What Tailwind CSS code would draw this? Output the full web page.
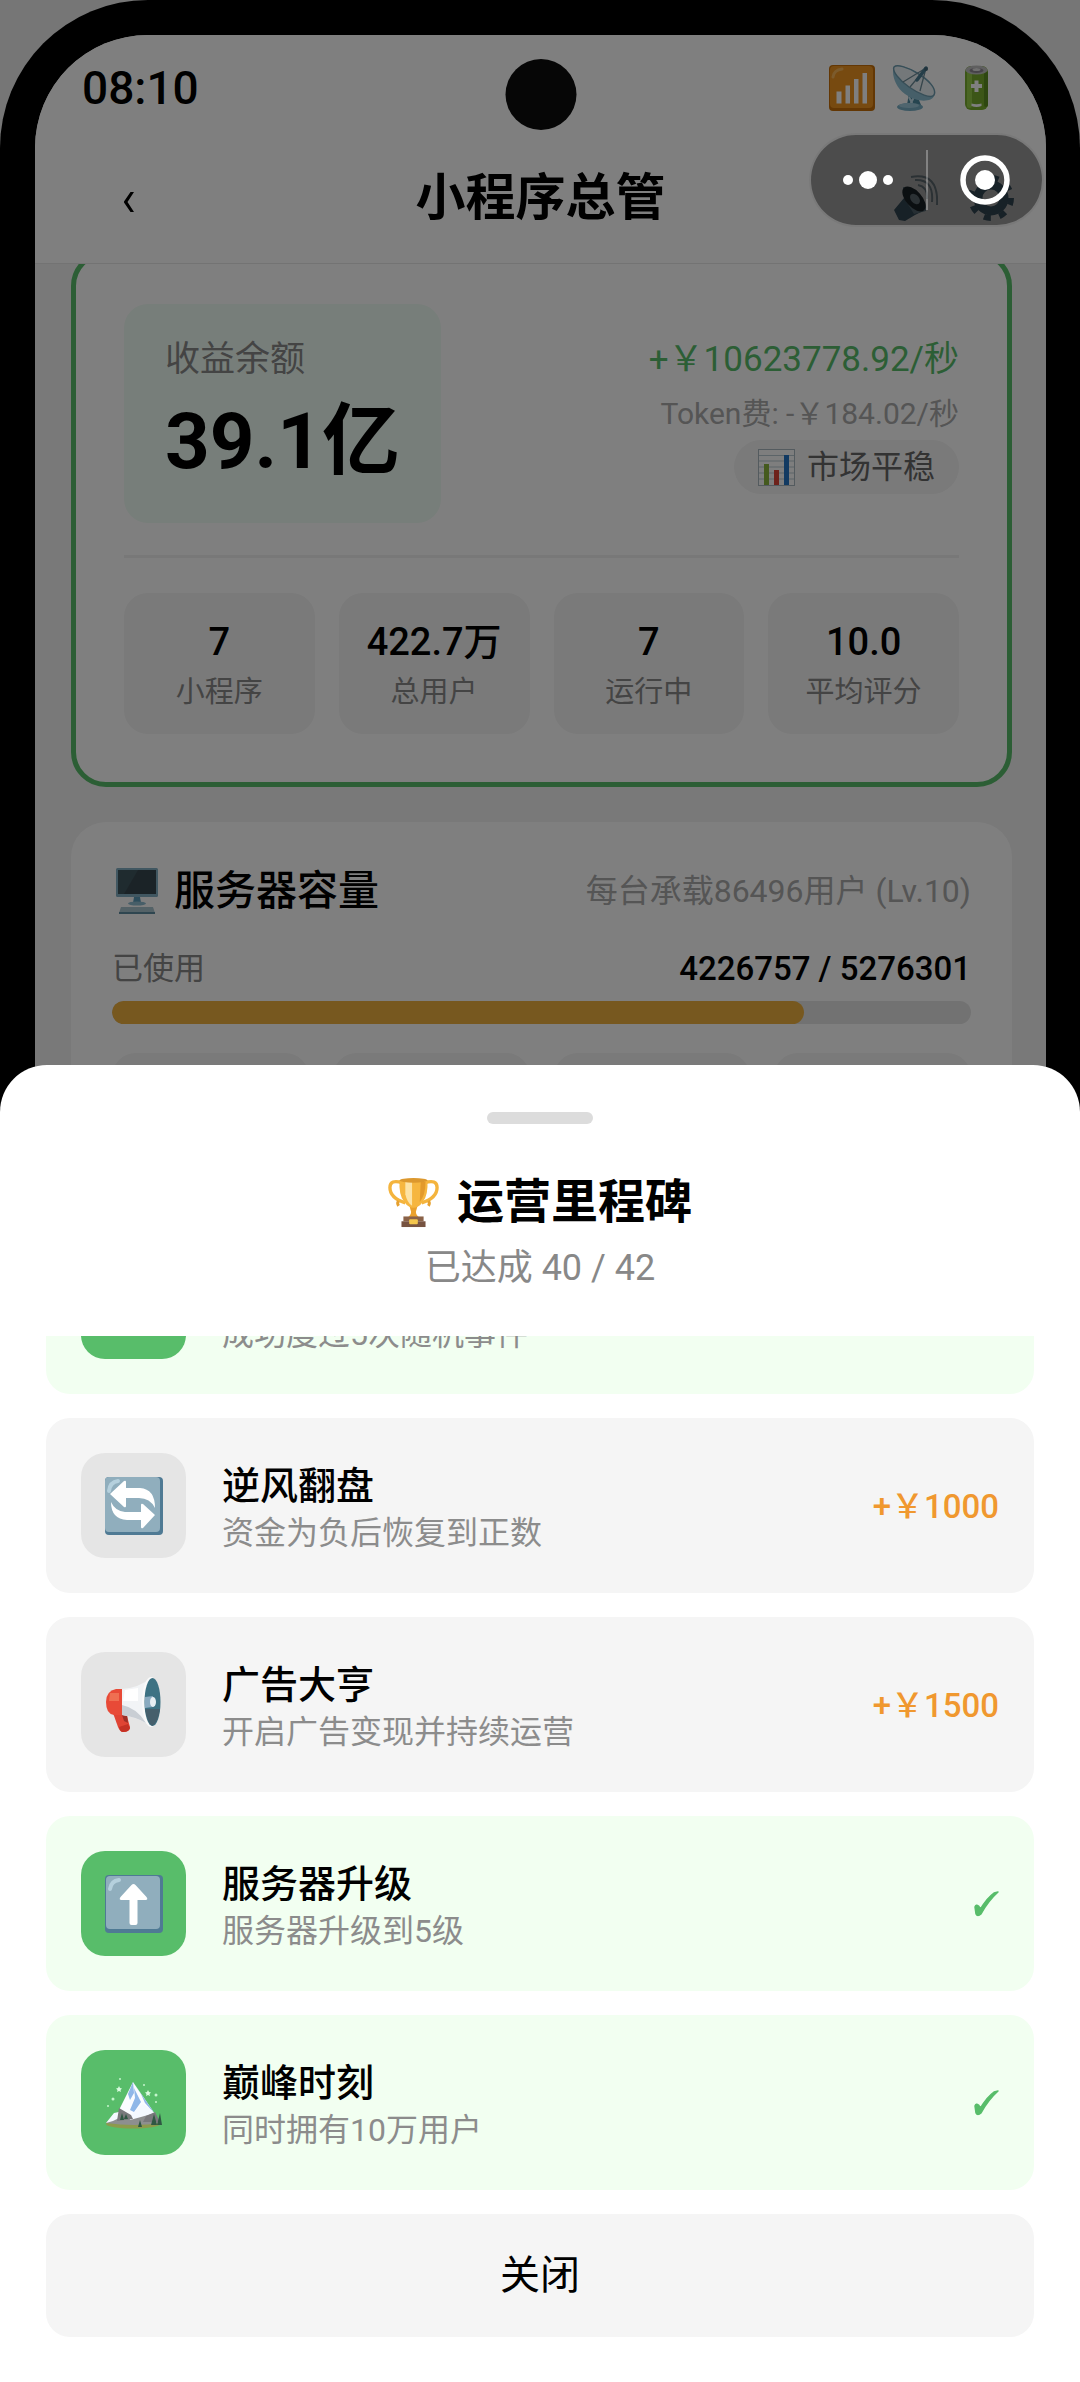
<!DOCTYPE html>
<html lang="zh-CN">
<head>
    <meta charset="UTF-8">
    <meta name="viewport" content="width=device-width, initial-scale=1.0">
    <title>小程序总管</title>
    <script src="https://cdn.jsdelivr.net/npm/@tailwindcss/browser@4"></script>
</head>
<body class="min-h-screen bg-[#ececec] font-[Roboto,'Noto_Sans_CJK_SC',sans-serif] text-black">

    <!-- 手机外壳 -->
    <div class="h-screen overflow-hidden rounded-t-[148px] bg-black pl-[35px] pr-[34px] pt-[35px]">
        <div class="relative h-full overflow-hidden rounded-t-[113px] bg-[#f2f2f2]">

            <!-- 摄像头 -->
            <div class="absolute left-1/2 top-6 size-[71px] -translate-x-1/2 rounded-full bg-[#0c0c0c]"></div>

            <header class="border-b border-[#e6e6e6] bg-white">
                <!-- 状态栏 -->
                <div class="flex h-[106px] items-center justify-between px-[47px]">
                    <span class="text-[46px] font-medium leading-[48px]">08:10</span>
                    <div class="flex gap-4">
                        <svg class="size-[46px]" viewBox="0 0 46 46" aria-label="信号">
                            <rect x="0" y="0" width="46" height="46" rx="4" fill="#c66f08"/>
                            <rect x="1" y="1" width="43" height="42" rx="4" fill="#ee9420"/>
                            <path d="M4 12Q5 5 13 4" stroke="#f8b659" stroke-width="3" fill="none" stroke-linecap="round"/>
                            <path d="M7.500 26.500h5v12h-5zM16.500 20.500h4.500v18h-4.500zM25 14h4.500v24.500h-4.500zM33.500 8h4.500v30.500h-4.500z" fill="#fff"/>
                        </svg>
                        <svg class="size-[46px]" viewBox="0 0 46 46" aria-label="卫星">
                            <path d="M18 28l-2 12h14l-4-10z" fill="#4d8aa0"/>
                            <path d="M18 32l4 8M23 32l-4 8" stroke="#c6e2ee" stroke-width="2"/>
                            <ellipse cx="19" cy="42" rx="13" ry="4" fill="#79afc5"/>
                            <ellipse cx="18" cy="40.500" rx="10" ry="2.500" fill="#9fcbdc"/>
                            <path d="M3 2C0 8 4 22 14 29C26 38 41 37 43 31C46 24 38 15 27 8C17 2 7-1 3 2z" fill="#8dbfd3"/>
                            <path d="M3 2C6-1 16 2 26 8C38 15 46 24 43 30C40 34 28 29 18 22C8 15 1 6 3 2z" fill="#e9f1f4" stroke="#6f9db0" stroke-width="1.500"/>
                            <path d="M35 3L12 17M35 3l-6 23M35 3L24 16l-5 6" stroke="#6c8b98" stroke-width="1.300" fill="none"/>
                            <path d="M35 3l-9 12" stroke="#4a7c92" stroke-width="3.500" stroke-linecap="round"/>
                            <circle cx="35" cy="4" r="2" fill="#41677a"/>
                        </svg>
                        <svg class="size-[46px]" viewBox="0 0 46 46" aria-label="电量">
                            <rect x="12" y="1" width="23" height="44" rx="6" fill="#78ad2e"/>
                            <rect x="14" y="4" width="5" height="39" rx="2.500" fill="#96cc48"/>
                            <rect x="31" y="6" width="4" height="36" rx="2" fill="#5d8f22"/>
                            <ellipse cx="23.500" cy="5" rx="11" ry="4.500" fill="#bfbfbf"/>
                            <ellipse cx="23.500" cy="5.500" rx="7" ry="2.500" fill="#8d8690"/>
                            <ellipse cx="23.500" cy="4.500" rx="4" ry="1.500" fill="#dedede"/>
                            <path d="M21.500 15.500h4v3.500h3.500v4h-3.500v4h-4v-4h-3.500v-4h3.500z" fill="#fff"/>
                            <path d="M18.500 38.500q5 1.500 10 0v2.500q-5 2-10 0z" fill="#fff"/>
                        </svg>
                    </div>
                </div>

                <!-- 导航栏 -->
                <div class="grid h-[122px] grid-cols-[1fr_auto_1fr] items-center pb-2">
                    <button class="ml-[59px] flex size-[70px] items-center justify-center" aria-label="返回">
                        <svg class="mt-2 h-[22px] w-[14px]" viewBox="0 0 14 22"><path d="M8.500 1h3.500L5.500 11l6.500 10H8.500L2 11.500v-1z" fill="#000"/></svg>
                    </button>
                    <h1 class="text-[50px] font-semibold leading-[60px]">小程序总管</h1>
                    <div class="mr-8 flex justify-end gap-[30px]">
                        <button aria-label="声音">
                            <svg class="size-[46px]" viewBox="0 0 46 46">
                                <path d="M2 35l10-12 17 14-6 3-10 6-6-1z" fill="#4d6f82"/>
                                <path d="M12 23L11 12q8 0 16 8t7 16l-12 3z" fill="#7f9cab"/>
                                <ellipse cx="22" cy="24" rx="15" ry="8" transform="rotate(48 22 24)" fill="#27323a"/>
                                <ellipse cx="23" cy="24" rx="6" ry="4" transform="rotate(48 23 24)" fill="#90a4ae"/>
                                <path d="M26 10q10 2 9 14M23 5q19-1 17 22M19 2q28-5 26 28" stroke="#90a4ae" stroke-width="2" fill="none"/>
                            </svg>
                        </button>
                        <button aria-label="设置">
                            <svg class="size-[46px]" viewBox="0 0 46 46">
                                <circle cx="23" cy="23" r="13" fill="none" stroke="#4f6f82" stroke-width="9"/>
                                <circle cx="23" cy="23" r="20" fill="none" stroke="#4f6f82" stroke-width="6" stroke-dasharray="7 8.700"/>
                            </svg>
                        </button>
                    </div>
                </div>
            </header>

            <main class="overflow-hidden pl-9 pr-[34px]">
                <!-- 收益卡片 -->
                <section class="-mt-[13px] rounded-[35px] border-[5px] border-[#58bd6a] bg-white p-12">
                    <div class="flex justify-between border-b-[3px] border-[#f0f0f0] pb-8">
                        <div class="rounded-3xl bg-[#effcf4] px-[41px] pb-[29px] pt-[30px]">
                            <p class="text-[35px] leading-[52px] text-[#888]">收益余额</p>
                            <p class="mt-1 text-[78px] font-bold leading-[104px]">39.1亿</p>
                        </div>
                        <div class="flex flex-col items-end pt-7">
                            <p class="text-[35px] leading-[56px] text-[#58bd6a]">+￥10623778.92/秒</p>
                            <p class="text-[30px] leading-[52px] text-[#aaa]">Token费: -￥184.02/秒</p>
                            <p class="flex items-center gap-3 rounded-full bg-[#f4f4f4] px-6 text-[32px] leading-[54px] text-[#666]">
                                <svg class="size-[37px]" viewBox="0 0 37 37">
                                    <rect x=".5" y=".5" width="36" height="36" fill="#fdfdfd" stroke="#a9b7bf"/>
                                    <path d="M1 6.500h35M1 12h35M1 18h35M1 24h35M1 30h35" stroke="#b9c8d0"/>
                                    <path d="M6 15h5v21h-5z" fill="#8bb53c"/>
                                    <path d="M16 21h5v15h-5z" fill="#dc4437"/>
                                    <path d="M26 6h5v30h-5z" fill="#2474c4"/>
                                </svg>
                                市场平稳
                            </p>
                        </div>
                    </div>
                    <div class="mt-[35px] grid grid-cols-4 gap-6 text-center">
                        <div class="rounded-3xl bg-[#f4f4f4] pb-[18px] pt-[23px]">
                            <p class="text-[38px] font-medium leading-[52px]">7</p>
                            <p class="text-[29px] leading-[48px] text-[#888]">小程序</p>
                        </div>
                        <div class="rounded-3xl bg-[#f4f4f4] pb-[18px] pt-[23px]">
                            <p class="text-[38px] font-medium leading-[52px]">422.7万</p>
                            <p class="text-[29px] leading-[48px] text-[#888]">总用户</p>
                        </div>
                        <div class="rounded-3xl bg-[#f4f4f4] pb-[18px] pt-[23px]">
                            <p class="text-[38px] font-medium leading-[52px]">7</p>
                            <p class="text-[29px] leading-[48px] text-[#888]">运行中</p>
                        </div>
                        <div class="rounded-3xl bg-[#f4f4f4] pb-[18px] pt-[23px]">
                            <p class="text-[38px] font-medium leading-[52px]">10.0</p>
                            <p class="text-[29px] leading-[48px] text-[#888]">平均评分</p>
                        </div>
                    </div>
                </section>

                <!-- 服务器容量 -->
                <section class="mt-[35px] rounded-[35px] bg-white px-[41px] pb-12 pt-[39px]">
                    <div class="flex items-center justify-between">
                        <h2 class="flex items-center gap-4 text-[41px] font-medium leading-[60px]">
                            <svg class="ml-1 h-[46px] w-[42px]" viewBox="0 0 42 46">
                                <rect x="0" y="0" width="42" height="29" rx="1.500" fill="#82aec2"/>
                                <rect x="2" y="2" width="38" height="24" fill="#37474f"/>
                                <path d="M2 2h20L8 26H2z" fill="#3f565f"/>
                                <path d="M18 29h6l1 6h-8z" fill="#5b9ab8"/>
                                <ellipse cx="21" cy="35.500" rx="9" ry="2" fill="#8ebdd0"/>
                                <path d="M5 39h32l2 6H3z" fill="#a9c4cf"/>
                                <path d="M3 45h36" stroke="#5f8ca0" stroke-width="2"/>
                            </svg>
                            服务器容量
                        </h2>
                        <span class="text-[32px] leading-[48px] text-[#aaa]">每台承载86496用户 (Lv.10)</span>
                    </div>
                    <div class="mt-6 flex items-center justify-between leading-[48px]">
                        <span class="text-[31px] text-[#888]">已使用</span>
                        <span class="text-[33px] font-medium">4226757 / 5276301</span>
                    </div>
                    <div class="mt-2 h-[23px] overflow-hidden rounded-full bg-[#e5e5e5]">
                        <div class="h-full rounded-full bg-[#eeb03e]" style="width: 80.6%"></div>
                    </div>
                    <div class="mt-[29px] grid grid-cols-4 gap-6">
                        <div class="h-[140px] rounded-3xl bg-[#f4f4f4]"></div>
                        <div class="h-[140px] rounded-3xl bg-[#f4f4f4]"></div>
                        <div class="h-[140px] rounded-3xl bg-[#f4f4f4]"></div>
                        <div class="h-[140px] rounded-3xl bg-[#f4f4f4]"></div>
                    </div>
                </section>
            </main>
        </div>
    </div>

    <!-- 遮罩 -->
    <div class="fixed inset-0 bg-black/50"></div>

    <!-- 里程碑弹层 -->
    <div role="dialog" aria-labelledby="sheet-title" class="fixed inset-x-0 bottom-0 rounded-t-[47px] bg-white px-[46px] pb-[45px] pt-[47px]">
        <div class="mx-auto h-3 w-[106px] rounded-full bg-[#dcdcdc]"></div>
        <h2 id="sheet-title" class="mt-[46px] flex items-center justify-center gap-[18px] text-[47px] font-semibold leading-[64px]">
            <svg class="size-[51px]" viewBox="0 0 53 53">
                <path d="M15 6Q2 2 2 11q0 11 16 16M38 6q13-4 13 5 0 11-16 16" fill="none" stroke="#f4b43d" stroke-width="3.500"/>
                <path d="M11 25q-2 2 0 5M42 25q2 2 0 5" fill="none" stroke="#e6a02e" stroke-width="3"/>
                <path d="M22 29h9l-2 7q0 4 4 6H20q4-2 4-6z" fill="#eaa12d"/>
                <path d="M12 3h29q1 16-5 23-4 6-9.500 6T17 26Q11 19 12 3z" fill="#f6b63f"/>
                <path d="M18 5h7v25q-5-3-7-12z" fill="#fde3a5"/>
                <path d="M34 5h5q0 14-6 21z" fill="#e39a2c"/>
                <ellipse cx="26.500" cy="3.500" rx="14.500" ry="2.500" fill="#dc982e"/>
                <path d="M16 41h21v5H16z" fill="#8a6248"/>
                <path d="M14 46h25v6H14z" fill="#775341"/>
                <rect x="22" y="44" width="9" height="5" rx="1" fill="#f4c64c"/>
            </svg>
            运营里程碑
        </h2>
        <p class="mt-2 text-center text-[36px] leading-[52px] text-[#888]">已达成 40 / 42</p>

        <!-- 列表停在底部 -->
        <div class="mt-[42px] flex h-[854px] flex-col-reverse overflow-y-auto [scrollbar-width:none]">
            <ul class="flex flex-col gap-6">
                <li class="flex h-[175px] shrink-0 items-center gap-9 rounded-3xl bg-[#f2fff1] px-[35px]">
                    <div class="size-[105px] rounded-3xl bg-[#58bd6a]"></div>
                    <p class="flex-1 pt-[54px] text-[32px] leading-[46px] text-[#8c8c8c]">成功度过5次随机事件</p>
                </li>
                <li class="flex h-[175px] shrink-0 items-center gap-9 rounded-3xl bg-[#f5f5f5] px-[35px]">
                    <div class="flex size-[105px] items-center justify-center rounded-3xl bg-[#e5e5e5]">
                        <svg class="size-[58px]" viewBox="0 0 58 58">
                            <rect x="0" y="0" width="58" height="58" rx="4" fill="#4f7a94"/>
                            <rect x="0" y="0" width="55" height="55" rx="4" fill="#90aebd"/>
                            <path d="M4 14q1-9 9-10" fill="none" stroke="#b5d0dd" stroke-width="4" stroke-linecap="round"/>
                            <path d="M5 17L19 4q2-1 2 1v6h14q15 1 15 20-5-10-16-10H21v8q0 2-2 1z" fill="#fff"/>
                            <path d="M50 38L38 51q-2 1-2-1v-7H22Q6 42 6 25q4 9 14 10h16v-7q0-2 2-1z" fill="#fff"/>
                        </svg>
                    </div>
                    <div class="flex-1 pt-[6px]">
                        <h3 class="text-[38px] font-medium leading-[48px]">逆风翻盘</h3>
                        <p class="text-[32px] leading-[46px] text-[#8c8c8c]">资金为负后恢复到正数</p>
                    </div>
                    <span class="pt-[3px] text-[33px] font-medium text-[#f0982f]">+￥1000</span>
                </li>
                <li class="flex h-[175px] shrink-0 items-center gap-9 rounded-3xl bg-[#f5f5f5] px-[35px]">
                    <div class="flex size-[105px] items-center justify-center rounded-3xl bg-[#e5e5e5]">
                        <svg class="size-[58px]" viewBox="0 0 58 58">
                            <path d="M8 37h13l4 14q0 5-7 5-3 0-5-5z" fill="#e04434"/>
                            <path d="M17 39l5-1 1 9-4-2z" fill="#9d2f27"/>
                            <path d="M14 51l9-3 2 4q-1 4-7 4-3 0-4-5z" fill="#c53225"/>
                            <path d="M17 13H11Q1 15 1 26q0 12 8 13h9z" fill="#e84a37"/>
                            <path d="M5 17h9v8H4z" fill="#ef6f52"/>
                            <path d="M17 13Q34 12 47 1v50Q33 41 17 39z" fill="#f2f4f6"/>
                            <path d="M17 29q15 3 24 18-10-6-24-8z" fill="#c9ced4"/>
                            <path d="M20 14l13-2v13H18z" fill="#fff"/>
                            <ellipse cx="46" cy="26" rx="9" ry="25" fill="#fafafa"/>
                            <ellipse cx="47.500" cy="26" rx="8" ry="24" fill="#3d7283"/>
                            <path d="M40 33q2 13 7 17 6-3 8-17z" fill="#455f6c"/>
                            <path d="M40 21l8-1v11l-8 1z" fill="#8aabc0"/>
                            <ellipse cx="48" cy="26" rx="3" ry="5" fill="#e7eef2"/>
                        </svg>
                    </div>
                    <div class="flex-1 pt-[6px]">
                        <h3 class="text-[38px] font-medium leading-[48px]">广告大亨</h3>
                        <p class="text-[32px] leading-[46px] text-[#8c8c8c]">开启广告变现并持续运营</p>
                    </div>
                    <span class="pt-[3px] text-[33px] font-medium text-[#f0982f]">+￥1500</span>
                </li>
                <li class="flex h-[175px] shrink-0 items-center gap-9 rounded-3xl bg-[#f2fff1] px-[35px]">
                    <div class="flex size-[105px] items-center justify-center rounded-3xl bg-[#58bd6a]">
                        <svg class="size-[58px]" viewBox="0 0 58 58">
                            <rect x="0" y="0" width="58" height="58" rx="4" fill="#4f7a94"/>
                            <rect x="1" y="1" width="54" height="53" rx="4" fill="#90aebd"/>
                            <path d="M5 14q1-8 9-9" fill="none" stroke="#b5d0dd" stroke-width="4" stroke-linecap="round"/>
                            <path d="M26.500 10q2-2 4 0l11 12q2 3-1 3h-8v23q0 2-2 2h-4q-2 0-2-2V25h-8q-3 0-1-3z" fill="#fff"/>
                        </svg>
                    </div>
                    <div class="flex-1 pt-[6px]">
                        <h3 class="text-[38px] font-medium leading-[48px]">服务器升级</h3>
                        <p class="text-[32px] leading-[46px] text-[#8c8c8c]">服务器升级到5级</p>
                    </div>
                    <svg class="h-[26px] w-[25px]" viewBox="0 0 25 26" aria-label="已达成"><path d="M1 16q1-3 3.500-1l2 3Q13 7 20 2l4-1Q14 10 7 23q-3.500 3-5 0z" fill="#58bd6a" stroke="#58bd6a" stroke-width="1.500" stroke-linejoin="round"/></svg>
                </li>
                <li class="flex h-[175px] shrink-0 items-center gap-9 rounded-3xl bg-[#f2fff1] px-[35px]">
                    <div class="flex size-[105px] items-center justify-center rounded-3xl bg-[#58bd6a]">
                        <svg class="size-[58px]" viewBox="0 0 58 58">
                            <ellipse cx="28" cy="50" rx="27" ry="4.500" fill="#8c9a4c"/>
                            <path d="M1 49l8-9 6-3 6 6 18-8 9 5 8 9q-26 4-55 0z" fill="#8d8f8f"/>
                            <path d="M28 8L14 36l12 7 22-6z" fill="#fafcff"/>
                            <path d="M28 8l-5 12 2 6 4-7zM29 14l7 14-7 10-4-2 5-12zM28 8l22 32-10-11-4-9z" fill="#8fb7e8"/>
                            <path d="M1 49l8-10 5-1 2 5-8 4zM24 43l14-13 12 9-14 4-11 3z" fill="#f4f9ff"/>
                            <path d="M14 34l12 7 2 4-16 2zM41 42l9-4 5 10H38z" fill="#79797c"/>
                            <path d="M17 39l2 7h-4zM21 40l2 5h-4zM35 46l2 7h-4zM49 40l3 11h-6zM55 39l2 12h-5z" fill="#2f5843"/>
                            <path d="M14 12l1 2 2 .5-1.500 1.500.5 2-2-1-2 1 .5-2L11 14.500l2-.5zM43 16l1 2 2 .5-1.500 1.500.5 2-2-1-2 1 .5-2-1.500-1.500 2-.5z" fill="#d9fbe0"/>
                            <g fill="#c4f5cd"><circle cx="15" cy="5" r="1"/><circle cx="39" cy="11" r="1"/><circle cx="51" cy="21" r="1.500"/><circle cx="8" cy="25" r="1.500"/><circle cx="3" cy="32" r="1"/><circle cx="51" cy="28" r="1"/></g>
                        </svg>
                    </div>
                    <div class="flex-1 pt-[6px]">
                        <h3 class="text-[38px] font-medium leading-[48px]">巅峰时刻</h3>
                        <p class="text-[32px] leading-[46px] text-[#8c8c8c]">同时拥有10万用户</p>
                    </div>
                    <svg class="h-[26px] w-[25px]" viewBox="0 0 25 26" aria-label="已达成"><path d="M1 16q1-3 3.500-1l2 3Q13 7 20 2l4-1Q14 10 7 23q-3.500 3-5 0z" fill="#58bd6a" stroke="#58bd6a" stroke-width="1.500" stroke-linejoin="round"/></svg>
                </li>
            </ul>
        </div>

        <button class="mt-6 h-[123px] w-full rounded-3xl bg-[#f5f5f5] text-[40px]">关闭</button>
    </div>

    <!-- 胶囊按钮 -->
    <div class="fixed right-9 top-[133px] flex h-[94px] w-[235px] items-center rounded-full border-2 border-white/25 bg-black/40">
        <button class="flex flex-1 items-center justify-center gap-[6px]" aria-label="更多">
            <span class="size-[10px] rounded-full bg-white"></span>
            <span class="size-[18px] rounded-full bg-white"></span>
            <span class="size-[10px] rounded-full bg-white"></span>
        </button>
        <span class="h-[60px] w-[2px] bg-white/30"></span>
        <button class="flex flex-1 items-center justify-center" aria-label="关闭小程序">
            <svg class="size-[50px]" viewBox="0 0 50 50">
                <circle cx="25" cy="25" r="22" fill="none" stroke="#fff" stroke-width="5.500"/>
                <circle cx="25" cy="25" r="10" fill="#fff"/>
            </svg>
        </button>
    </div>

</body>
</html>
